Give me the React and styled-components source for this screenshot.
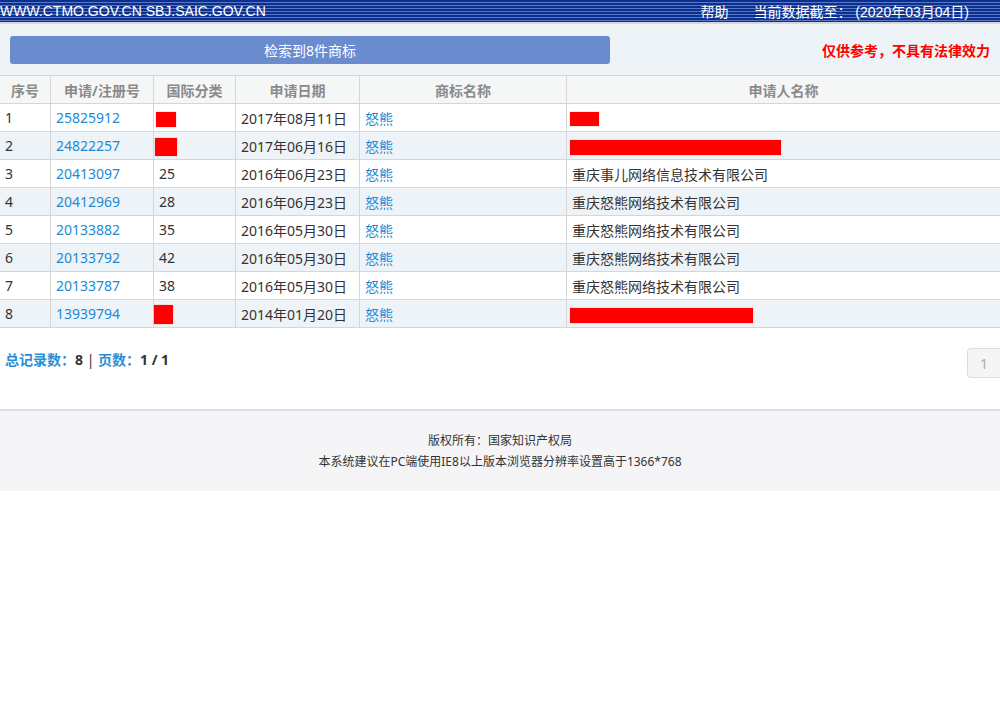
import React from 'react';
import styled, { createGlobalStyle } from 'styled-components';

const GlobalStyle = createGlobalStyle`
  html, body {
    margin: 0;
    padding: 0;
    background: #fff;
    font-family: "Noto Sans", "Noto Sans CJK SC", sans-serif;
    color: #333;
  }
`;

const TopBar = styled.div`
  height: 22px;
  display: flex;
  align-items: center;
  justify-content: space-between;
  color: #fff;
  font-family: "Liberation Sans", "Noto Sans CJK SC", sans-serif;
  font-size: 14px;
  background-color: #0b2f8e;
  background-image: repeating-linear-gradient(
    to bottom,
    #0b2f8e 0px,
    #0b2f8e 2px,
    #5a78c4 2px,
    #5a78c4 3px
  );
  border-bottom: 2px solid #d4d7dc;
  white-space: nowrap;
`;

const TopRight = styled.div`
  display: flex;
  gap: 25px;
  padding-right: 31px;
`;

const SearchBar = styled.div`
  background: #eef3f8;
  height: 51px;
  display: flex;
  align-items: center;
  justify-content: space-between;
  padding: 0 10px;
`;

const ResultButton = styled.div`
  width: 600px;
  height: 28px;
  background: #6a8ccf;
  border-radius: 3px;
  color: #fff;
  font-size: 14px;
  display: flex;
  align-items: center;
  justify-content: center;
`;

const Notice = styled.div`
  color: #ff0000;
  font-weight: bold;
  font-size: 14px;
`;

const Table = styled.table`
  width: 100%;
  table-layout: fixed;
  border-collapse: collapse;
  font-size: 14px;
`;

const Th = styled.th`
  height: 27px;
  padding: 0;
  background: #f5f6f6;
  color: #8a8a8a;
  font-weight: bold;
  font-size: 14px;
  border: 1px solid #d6d6d6;
  width: ${(p) => p.$w || 'auto'};
  &:first-child { border-left: none; }
  &:last-child { border-right: none; }
`;

const Tr = styled.tr`
  background: ${(p) => (p.$alt ? '#eef3f8' : '#fff')};
`;

const Td = styled.td`
  height: 27px;
  padding: 0 5px;
  border: 1px solid #d6d6d6;
  color: ${(p) => (p.$link ? '#1a8bd6' : '#333')};
  white-space: nowrap;
  overflow: visible;
  &:first-child { border-left: none; }
  &:last-child { border-right: none; }
`;

const Redact = styled.span`
  display: inline-block;
  vertical-align: middle;
  background: #ff0000;
  width: ${(p) => p.$w}px;
  height: ${(p) => p.$h}px;
  margin-left: ${(p) => p.$ml || 0}px;
  box-shadow: 0 0 1px rgba(255, 0, 0, 0.5);
`;

const Pager = styled.div`
  display: flex;
  justify-content: space-between;
  align-items: flex-start;
  padding: 20px 0 0 5px;
  height: 61px;
`;

const Summary = styled.div`
  font-size: 14px;
  margin-top: 1px;
  white-space: pre;
`;

const Label = styled.span`
  color: #2a8ed6;
  font-weight: bold;
`;

const Num = styled.span`
  color: #333;
  font-weight: bold;
`;

const Sep = styled.span`
  color: #333;
`;

const PageBtn = styled.div`
  width: 32px;
  height: 28px;
  border: 1px solid #ddd;
  border-right: none;
  border-radius: 4px 0 0 4px;
  background: #f5f5f5;
  color: #aaa;
  font-size: 14px;
  display: flex;
  align-items: center;
  justify-content: center;
`;

const Footer = styled.div`
  border-top: 2px solid #d9dce9;
  background: #f5f5f7;
  height: 80px;
  display: flex;
  flex-direction: column;
  align-items: center;
  justify-content: center;
  gap: 4px;
  font-size: 12px;
  color: #333;
  line-height: 17px;
`;

const rows = [
  { no: 1, reg: '25825912', cls: { w: 20, h: 15, ml: -3 }, date: '2017年08月11日', app: { w: 29, h: 14, ml: -2 } },
  { no: 2, reg: '24822257', cls: { w: 22, h: 18, ml: -4 }, date: '2017年06月16日', app: { w: 211, h: 15, ml: -2 } },
  { no: 3, reg: '20413097', cls: '25', date: '2016年06月23日', app: '重庆事儿网络信息技术有限公司' },
  { no: 4, reg: '20412969', cls: '28', date: '2016年06月23日', app: '重庆怒熊网络技术有限公司' },
  { no: 5, reg: '20133882', cls: '35', date: '2016年05月30日', app: '重庆怒熊网络技术有限公司' },
  { no: 6, reg: '20133792', cls: '42', date: '2016年05月30日', app: '重庆怒熊网络技术有限公司' },
  { no: 7, reg: '20133787', cls: '38', date: '2016年05月30日', app: '重庆怒熊网络技术有限公司' },
  { no: 8, reg: '13939794', cls: { w: 19, h: 19, ml: -5 }, date: '2014年01月20日', app: { w: 183, h: 15, ml: -2 } },
];

const Cell = ({ v }) =>
  typeof v === 'string' ? v : <Redact $w={v.w} $h={v.h} $ml={v.ml} />;

const App = () => (
  <>
    <GlobalStyle />
    <TopBar>
      <span>WWW.CTMO.GOV.CN SBJ.SAIC.GOV.CN</span>
      <TopRight>
        <span>帮助</span>
        <span>当前数据截至： (2020年03月04日)</span>
      </TopRight>
    </TopBar>
    <SearchBar>
      <ResultButton>检索到8件商标</ResultButton>
      <Notice>仅供参考，不具有法律效力</Notice>
    </SearchBar>
    <Table>
      <thead>
        <tr>
          <Th $w="50px">序号</Th>
          <Th $w="102px">申请/注册号</Th>
          <Th $w="81px">国际分类</Th>
          <Th $w="123px">申请日期</Th>
          <Th $w="206px">商标名称</Th>
          <Th>申请人名称</Th>
        </tr>
      </thead>
      <tbody>
        {rows.map((r, i) => (
          <Tr key={r.no} $alt={i % 2 === 1}>
            <Td>{r.no}</Td>
            <Td $link>{r.reg}</Td>
            <Td><Cell v={r.cls} /></Td>
            <Td>{r.date}</Td>
            <Td $link>怒熊</Td>
            <Td><Cell v={r.app} /></Td>
          </Tr>
        ))}
      </tbody>
    </Table>
    <Pager>
      <Summary>
        <Label>总记录数：</Label>
        <Num>8 </Num>
        <Sep>| </Sep>
        <Label>页数：</Label>
        <Num>1 / 1</Num>
      </Summary>
      <PageBtn>1</PageBtn>
    </Pager>
    <Footer>
      <div>版权所有：国家知识产权局</div>
      <div>本系统建议在PC端使用IE8以上版本浏览器分辨率设置高于1366*768</div>
    </Footer>
  </>
);

export default App;
